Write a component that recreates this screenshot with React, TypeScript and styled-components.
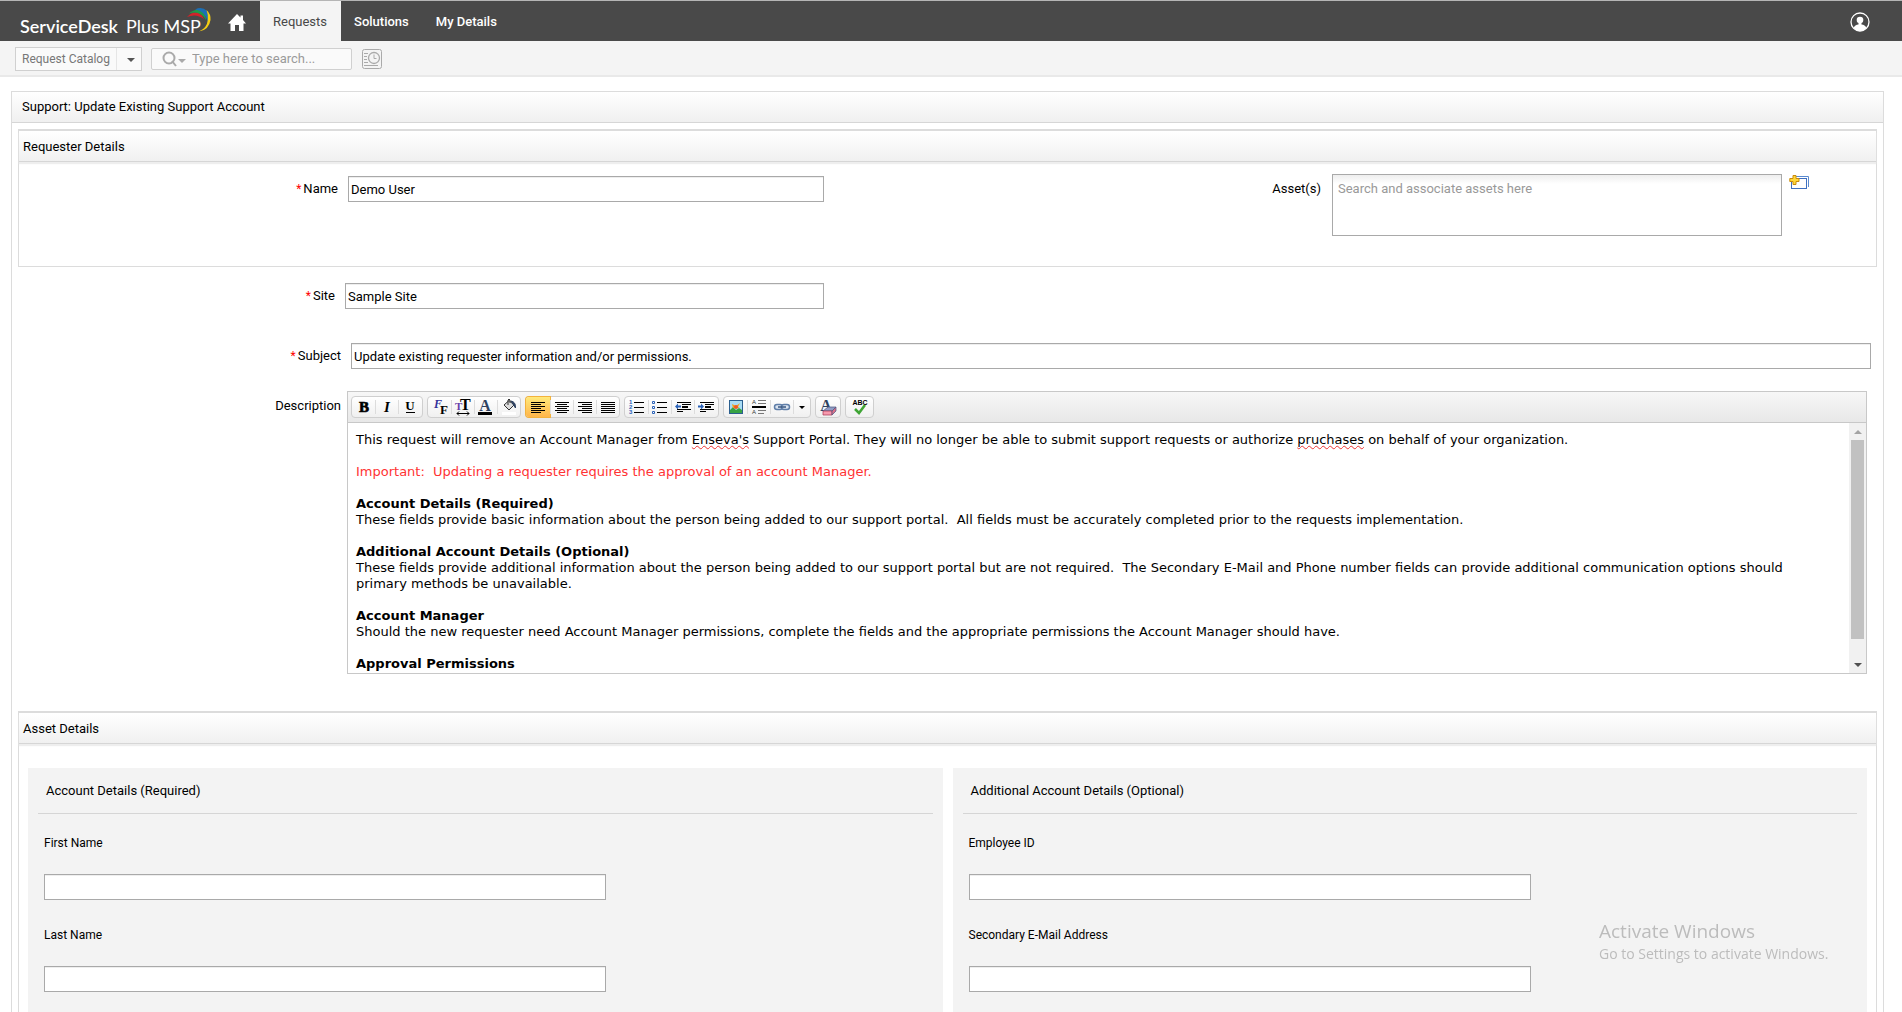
import React from 'react';
import styled, { createGlobalStyle } from 'styled-components';

const GlobalStyle = createGlobalStyle`
  *, *::before, *::after { box-sizing: border-box; }
  body {
    margin: 0;
    background: #fff;
    color: #000;
    font: 13px/16px Roboto, "Liberation Sans", sans-serif;
  }
  button, input, select, textarea { font: inherit; color: inherit; margin: 0; }
`;

const Page = styled.div`
  height: 100vh;
  overflow: hidden;
`;

/* ---------- top bar ---------- */
const TopBar = styled.header`
  display: flex;
  align-items: stretch;
  height: 41px;
  padding: 0 32px 0 20px;
  background: #494949;
  border-top: 1px solid #b5b5b5;
  color: #fff;
`;

const Logo = styled.a`
  display: flex;
  align-items: center;
  width: 193px;
  padding-top: 9px;
  position: relative;
  color: #fff;
  text-decoration: none;
  white-space: nowrap;
  font: 600 18px/20px Lato, "Open Sans", sans-serif;
  span { font-weight: 400; margin-left: 8px; }
  svg { position: absolute; left: 167px; top: 6px; }
`;

const HomeLink = styled.a`
  display: flex;
  align-items: center;
  justify-content: center;
  width: 47px;
  padding-top: 2px;
`;

const NavLink = styled.a<{ $active?: boolean }>`
  display: flex;
  align-items: center;
  padding: 2px 14px 0 13px;
  color: ${(p) => (p.$active ? '#484848' : '#fff')};
  background: ${(p) => (p.$active ? '#f4f4f4' : 'transparent')};
  font-weight: ${(p) => (p.$active ? 400 : 500)};
  text-decoration: none;
`;

const UserButton = styled.button`
  display: flex;
  align-items: center;
  margin-left: auto;
  padding: 2px 0 0;
  border: 0;
  background: none;
`;

/* ---------- tool strip ---------- */
const ToolStrip = styled.div`
  display: flex;
  align-items: center;
  height: 36px;
  padding: 1px 15px 0;
  background: #f4f4f4;
  border-bottom: 2px solid #e9e9e9;
`;

const CatalogBox = styled.div`
  display: flex;
  position: relative;
  width: 127px;
  height: 24px;
  margin-right: 9px;
  border: 1px solid #d0d0d0;
  background: #fafafa;
  svg { position: absolute; right: 6px; top: 10px; pointer-events: none; }
  &::after {
    content: "";
    position: absolute;
    right: 24px;
    top: 0;
    bottom: 0;
    border-left: 1px solid #e6e6e6;
  }
`;

const CatalogSelect = styled.select`
  flex: 1;
  min-width: 0;
  padding: 0 0 0 6px;
  border: 0;
  background: none;
  color: #777;
  font-size: 12px;
  appearance: none;
`;

const SearchBox = styled.div`
  display: flex;
  align-items: center;
  gap: 5px;
  width: 201px;
  height: 22px;
  margin-right: 10px;
  padding-left: 10px;
  border: 1px solid #d0d0d0;
  border-radius: 2px;
  background: #fafafa;
`;

const SearchInput = styled.input`
  flex: 1;
  min-width: 0;
  padding: 0;
  border: 0;
  background: none;
  &::placeholder { color: #9a9a9a; opacity: 1; }
`;

const IconButton = styled.button`
  display: flex;
  flex: none;
  padding: 0;
  border: 0;
  background: none;
`;

/* ---------- panels ---------- */
const Panel = styled.main`
  margin: 14px 18px 0 11px;
  border: 1px solid #dcdcdc;
`;

const PanelTitle = styled.h1`
  margin: 0 0 6px;
  padding: 7px 10px;
  font-size: 13px;
  line-height: 16px;
  font-weight: 400;
  border-bottom: 1px solid #d6d6d6;
  background: linear-gradient(#fff, #f0f0f0);
`;

const Section = styled.section`
  margin: 0 6px;
  border: 1px solid #dcdcdc;
  border-top-width: 2px;
`;

const SectionTitle = styled.h2`
  margin: 0;
  padding: 8px 4px 6px;
  font-size: 13px;
  line-height: 16px;
  font-weight: 400;
  border-bottom: 1px solid #d6d6d6;
  box-shadow: 0 2px 1px #eee;
  background: linear-gradient(#fff, #f0f0f0);
`;

const Row = styled.div<{ $top?: number; $right?: number; $gap?: number }>`
  display: flex;
  flex: 1;
  align-items: flex-start;
  gap: ${(p) => p.$gap ?? 10}px;
  margin-top: ${(p) => p.$top ?? 0}px;
  padding-right: ${(p) => p.$right ?? 0}px;
`;

const Label = styled.label<{ $width?: number; $required?: boolean; $top?: number }>`
  flex: none;
  width: ${(p) => (p.$width ? p.$width + 'px' : 'auto')};
  padding-top: ${(p) => p.$top ?? 5}px;
  text-align: right;
  &::before {
    content: "${(p) => (p.$required ? '*' : '')}";
    color: #f00;
    font-size: 12px;
    margin-right: ${(p) => (p.$required ? 2 : 0)}px;
  }
`;

const TextInput = styled.input<{ $width?: number }>`
  flex: ${(p) => (p.$width ? `0 1 ${p.$width}px` : '1')};
  min-width: 0;
  height: 26px;
  padding: 1px 2px 0;
  border: 1px solid #a9a9a9;
  background: #fff;
  box-shadow: inset 0 1px 0 #eee;
`;

const AssetField = styled.div`
  display: flex;
  align-items: flex-start;
  gap: 7px;
  margin-left: auto;
  label { margin-right: 4px; }
`;

const AssetArea = styled.textarea`
  display: block;
  width: 450px;
  height: 62px;
  padding: 6px 5px;
  border: 1px solid #a9a9a9;
  resize: none;
  background: linear-gradient(#eee, #fff 9px);
  &::placeholder { color: #999; opacity: 1; }
`;

const RequesterBody = styled.div`
  display: flex;
  align-items: flex-start;
  min-height: 104px;
  padding: 12px 67px 0 0;
`;

/* ---------- rich text editor ---------- */
const Editor = styled.div`
  flex: 1;
  min-width: 0;
  border: 1px solid #c8c8c8;
`;

const EditorBar = styled.div`
  display: flex;
  gap: 4px;
  height: 31px;
  padding: 4px 3px;
  border-bottom: 1px solid #c8c8c8;
  background: linear-gradient(#f7f7f7, #e8e8e8);
`;

const ToolGroup = styled.div`
  display: flex;
  height: 22px;
  border: 1px solid #cfcfcf;
  border-radius: 4px;
  background: linear-gradient(#fff, #f0f0f0);
`;

const ToolButton = styled.button<{ $active?: boolean; $width?: number }>`
  display: flex;
  align-items: center;
  justify-content: center;
  width: ${(p) => p.$width ?? 23}px;
  padding: 0;
  border: 0;
  border-radius: ${(p) => (p.$active ? '3px 0 0 3px' : '0')};
  background: ${(p) => (p.$active ? 'linear-gradient(#ffe97a, #ffb54a)' : 'none')};
  box-shadow: ${(p) => (p.$active ? '0 0 0 1px #f3b23c' : 'none')};
  svg { display: block; overflow: visible; }
  & + & {
    background-image: linear-gradient(#dcdcdc, #dcdcdc);
    background-size: 1px 14px;
    background-position: 0 3px;
    background-repeat: no-repeat;
  }
`;

const EditorBody = styled.div`
  display: flex;
  height: 250px;
`;

const EditorText = styled.div`
  flex: 1;
  min-width: 0;
  overflow: hidden;
  padding: 9px 18px 0 8px;
  font: 13px/16px Verdana, "DejaVu Sans", sans-serif;
  outline: none;
  p { margin: 0 0 16px; white-space: pre-wrap; }
`;

const Warning = styled.p`
  color: #f33;
`;

const Misspelt = styled.span`
  text-decoration: underline wavy #e33 1px;
  text-underline-offset: 1px;
  text-decoration-skip-ink: none;
`;

const ScrollTrack = styled.div`
  display: flex;
  flex-direction: column;
  align-items: center;
  width: 17px;
  background: #f1f1f1;
`;

const ScrollArrow = styled.button`
  display: flex;
  align-items: center;
  justify-content: center;
  width: 17px;
  height: 17px;
  padding: 0;
  border: 0;
  background: none;
`;

const ScrollThumb = styled.div`
  width: 13px;
  height: 199px;
  margin-bottom: auto;
  background: #c1c1c1;
`;

/* ---------- detail cards ---------- */
const Cards = styled.div`
  display: grid;
  grid-template-columns: 1fr 1fr;
  gap: 10px;
  padding: 24px 9px 0;
`;

const Card = styled.fieldset`
  display: block;
  min-width: 0;
  margin: 0;
  padding: 15px 10px 60px;
  border: 0;
  background: #f3f3f3;
`;

const CardTitle = styled.h3`
  margin: 0;
  padding: 0 8px 14px;
  font-size: 13px;
  line-height: 16px;
  font-weight: 400;
  border-bottom: 1px solid #d5d5d5;
`;

const CardField = styled.div`
  display: flex;
  flex-direction: column;
  align-items: flex-start;
  gap: 23px;
  padding: 21px 6px 6px;
  font-size: 12px;
  label { line-height: 16px; }
  input { flex: none; width: 562px; max-width: 100%; }
`;

const Watermark = styled.aside`
  position: fixed;
  left: calc(100% - 303px);
  bottom: 48px;
  color: #bcbcbc;
  font: 14px/20px "Open Sans", sans-serif;
  white-space: nowrap;
  pointer-events: none;
  strong { display: block; font-size: 19px; line-height: 26px; font-weight: 400; }
`;

/* ---------- drawings ---------- */
const Caret = ({ color = '#555', up = false }: { color?: string; up?: boolean }) => (
  <svg width="8" height="4" viewBox="0 0 8 4">
    <path d={up ? 'M0 4L4 0L8 4Z' : 'M0 0H8L4 4Z'} fill={color} />
  </svg>
);

const Lines = ({ rows }: { rows: [number, number][] }) => (
  <svg width="16" height="14" viewBox="0 0 16 14" shapeRendering="crispEdges">
    {rows.map(([x, w], i) => (
      <rect key={i} x={x} y={2 + i * 2} width={w} height="1" fill="#000" />
    ))}
  </svg>
);

const svg16 = { width: 18, height: 18, viewBox: '0 0 18 18' };
const serif = 'Liberation Serif, serif';

const icons = {
  bold: <svg {...svg16}><text x="9" y="14" textAnchor="middle" fontFamily={serif} fontWeight="700" fontSize="15" stroke="#000" strokeWidth=".7">B</text></svg>,
  italic: <svg {...svg16}><text x="9" y="14" textAnchor="middle" fontFamily={serif} fontStyle="italic" fontWeight="700" fontSize="15">I</text></svg>,
  underline: <svg {...svg16}><text x="9" y="12" textAnchor="middle" fontFamily={serif} fontWeight="700" fontSize="13">U</text><path d="M5 14.500H14" stroke="#000" /></svg>,
  font: <svg {...svg16}><text x="3" y="10" fontFamily={serif} fontStyle="italic" fontWeight="700" fontSize="12" fill="#33339a">F</text><text x="9" y="16" fontFamily={serif} fontWeight="700" fontSize="13">F</text></svg>,
  size: <svg {...svg16}><text x="1" y="12" fontFamily={serif} fontWeight="700" fontSize="11" fill="#6a3fa8">T</text><text x="6" y="12" fontFamily={serif} fontWeight="700" fontSize="16">T</text><path d="M3 15.500H15M5 13.500L3 15.500L5 17.500M13 13.500L15 15.500L13 17.500" stroke="#000" fill="none" /></svg>,
  color: <svg {...svg16}><text x="8" y="13" textAnchor="middle" fontFamily={serif} fontWeight="700" fontSize="16" fill="#2f4260">A</text><path d="M1 14H15V17H1Z" /></svg>,
  fill: <svg {...svg16}><path d="M2 14H16V17H2Z" fill="#fff" /><path d="M4 7L9 2.500L14 7L9 12Z" fill="#ddd" stroke="#333" /><path d="M8 7V2Q9 0 10 2V5" fill="none" stroke="#333" /><path d="M11 3Q16 4 15.500 10Q14 8 13 6Z" fill="#2f4260" stroke="#2f4260" /></svg>,
  ordered: <svg {...svg16}><g fill="#2a62b8" fontFamily="Liberation Sans, sans-serif" fontSize="6" fontWeight="700"><text x="1" y="6">1</text><text x="1" y="11">2</text><text x="1" y="16">3</text></g><path d="M6 4.500H16M6 9.500H16M6 14.500H16" stroke="#000" /></svg>,
  bullets: <svg {...svg16}><path d="M1.500 3.500h2v2h-2zM1.500 8.500h2v2h-2zM1.500 13.500h2v2h-2z" fill="#fff" stroke="#2a62b8" /><path d="M6 4.500H16M6 9.500H16M6 14.500H16" stroke="#000" /></svg>,
  outdent: <svg {...svg16}><path d="M3 4.500H17M8 6.500H17" stroke="#000" /><path d="M8 9H14" stroke="#000" strokeWidth="2" /><path d="M3 11.500H17M3 13.500H9" stroke="#000" /><path d="M1 8.500L4 5.500V7.500H7V9.500H4V11.500Z" fill="#2a62b8" /></svg>,
  indent: <svg {...svg16}><path d="M3 4.500H17M8 6.500H17" stroke="#000" /><path d="M8 9H14" stroke="#000" strokeWidth="2" /><path d="M3 11.500H17M3 13.500H9" stroke="#000" /><path d="M7 8.500L4 5.500V7.500H1V9.500H4V11.500Z" fill="#2a62b8" /></svg>,
  image: <svg {...svg16}><rect x="2.500" y="2.500" width="13" height="13" fill="#a9dcf5" stroke="#2b5f8f" /><path d="M3 15V12L6 9L9 12L12 10L15 12V15Z" fill="#37a344" /><path d="M5 6L9 8L13 5L11 9L13 10H6Z" fill="#f2a21b" /><circle cx="9" cy="9" r="2" fill="#ee5a24" /></svg>,
  rule: <svg {...svg16}><g fontFamily="Liberation Sans, sans-serif" fontSize="6" fill="#333"><text x="2" y="6">A</text><text x="2" y="16">A</text></g><path d="M8 2.500H16M8 5.500H16M8 12.500H16M8 15.500H14" stroke="#777" /><path d="M2 9H16" stroke="#000" strokeWidth="2" /></svg>,
  link: <svg {...svg16}><rect x="1.500" y="6.500" width="8" height="5" rx="2.500" fill="#dbe5f1" stroke="#5f7ea8" strokeWidth="1.500" /><rect x="8.500" y="6.500" width="8" height="5" rx="2.500" fill="#dbe5f1" stroke="#5f7ea8" strokeWidth="1.500" /><path d="M5 9H13" stroke="#39567f" strokeWidth="1.500" /></svg>,
  clear: <svg {...svg16}><text x="7" y="13" textAnchor="middle" fontFamily={serif} fontWeight="700" fontSize="16" fill="#2f4260">A</text><path d="M4 13L9 9H17L13 13Z" fill="#8f9cc4" stroke="#4c5682" strokeWidth=".7" /><path d="M4 13H13V17H4Z" fill="#f79aae" stroke="#a3324d" strokeWidth=".7" /><path d="M13 13L17 9V13L13 17Z" fill="#d8718a" stroke="#4c5682" strokeWidth=".7" /></svg>,
  spell: <svg {...svg16}><path d="M4 11L8 15L14 7" stroke="#3fa535" strokeWidth="2.500" fill="none" /><text x="9" y="7" textAnchor="middle" fontFamily="Liberation Sans, sans-serif" fontWeight="700" fontSize="7">ABC</text></svg>,
};

const toolGroups: { label: string; icon: React.ReactNode; active?: boolean; width?: number }[][] = [
  [
    { label: 'Bold', icon: icons.bold },
    { label: 'Italic', icon: icons.italic },
    { label: 'Underline', icon: icons.underline, width: 24 },
  ],
  [
    { label: 'Font', icon: icons.font },
    { label: 'Font size', icon: icons.size },
    { label: 'Font colour', icon: icons.color },
    { label: 'Fill colour', icon: icons.fill },
  ],
  [
    { label: 'Align left', active: true, width: 24, icon: <Lines rows={[[1, 14], [1, 10], [1, 14], [1, 10], [1, 14], [1, 10]]} /> },
    { label: 'Align centre', icon: <Lines rows={[[1, 14], [3, 10], [1, 14], [3, 10], [1, 14], [3, 10]]} /> },
    { label: 'Align right', icon: <Lines rows={[[1, 14], [5, 10], [1, 14], [5, 10], [1, 14], [5, 10]]} /> },
    { label: 'Justify', icon: <Lines rows={[[1, 14], [1, 14], [1, 14], [1, 14], [1, 14], [1, 14]]} /> },
  ],
  [
    { label: 'Numbered list', icon: icons.ordered },
    { label: 'Bulleted list', icon: icons.bullets },
    { label: 'Outdent', icon: icons.outdent },
    { label: 'Indent', icon: icons.indent, width: 24 },
  ],
  [
    { label: 'Image', icon: icons.image },
    { label: 'Rule', icon: icons.rule },
    { label: 'Link', icon: icons.link },
    { label: 'More links', icon: <svg width="6" height="3" viewBox="0 0 6 3"><path d="M0 0H6L3 3Z" /></svg>, width: 17 },
  ],
  [{ label: 'Clear formatting', icon: icons.clear, width: 24 }],
  [{ label: 'Check spelling', icon: icons.spell, width: 27 }],
];

const cards = [
  { title: 'Account Details (Required)', fields: ['First Name', 'Last Name'] },
  { title: 'Additional Account Details (Optional)', fields: ['Employee ID', 'Secondary E-Mail Address'] },
];

export default function App() {
  return (
    <Page>
      <GlobalStyle />
      <TopBar>
        <Logo href="#">
          ServiceDesk<span>Plus MSP</span>
          <svg width="24" height="26" viewBox="0 0 24 26">
            <path d="M0 10Q8 2 15 8.500L17 12Q9 6 0 10Z" fill="#d2232a" />
            <path d="M2 6.500Q10 0 16 5Q19 8 19 13Q13 2.500 2 6.500Z" fill="#1f9a49" />
            <path d="M8 2.500Q15 -1 20 4Q22 7 21 15Q17 3 8 2.500Z" fill="#1c6fb5" />
            <path d="M19.500 3Q24 7 23.500 13Q22 23 12 24.500Q20 21 20.800 13Q21.500 8 19.500 3Z" fill="#f5cd12" />
          </svg>
        </Logo>
        <HomeLink href="#" aria-label="Home">
          <svg width="18" height="17" viewBox="0 0 18 17" fill="#fff">
            <path d="M9 0L12.500 3.500V1.500H15V6L18 9.500H15.500V17H11V11H7V17H2.500V9.500H0Z" />
          </svg>
        </HomeLink>
        <NavLink href="#" $active>Requests</NavLink>
        <NavLink href="#">Solutions</NavLink>
        <NavLink href="#">My Details</NavLink>
        <UserButton aria-label="Account">
          <svg width="20" height="20" viewBox="0 0 20 20">
            <circle cx="10" cy="10" r="9" fill="none" stroke="#fff" strokeWidth="1.300" />
            <circle cx="10" cy="8" r="3.300" fill="#fff" />
            <path d="M3.500 16Q5 12.500 8.500 12.500V11H11.500V12.500Q15 12.500 16.500 16Q14 19 10 19Q6 19 3.500 16Z" fill="#fff" />
          </svg>
        </UserButton>
      </TopBar>

      <ToolStrip>
        <CatalogBox>
          <CatalogSelect aria-label="Catalog"><option>Request Catalog</option></CatalogSelect>
          <Caret />
        </CatalogBox>
        <SearchBox>
          <svg width="25" height="16" viewBox="0 0 25 16">
            <circle cx="7" cy="7" r="5.500" fill="none" stroke="#aaa" strokeWidth="2" />
            <path d="M10 10L14 15" stroke="#aaa" strokeWidth="2" />
            <path d="M16 8H24L20 12Z" fill="#aaa" />
          </svg>
          <SearchInput aria-label="Search" placeholder="Type here to search..." />
        </SearchBox>
        <IconButton aria-label="Recent items">
          <svg width="20" height="20" viewBox="0 0 20 20" fill="none" stroke="#aaa">
            <rect x=".5" y=".5" width="19" height="19" rx="2" />
            <path d="M2 4.500H6M2 7.500H5M2 10.500H5M2 13.500H6M2 16.500H16" />
            <circle cx="12" cy="9" r="5.500" strokeWidth="1.300" />
            <path d="M12 5.500V9.500H14.500" />
          </svg>
        </IconButton>
      </ToolStrip>

      <Panel>
        <PanelTitle>Support: Update Existing Support Account</PanelTitle>

        <Section>
          <SectionTitle>Requester Details</SectionTitle>
          <RequesterBody>
            <Row $top={2}>
              <Label htmlFor="name" $width={319} $required>Name</Label>
              <TextInput id="name" $width={476} defaultValue="Demo User" />
            </Row>
            <AssetField>
              <Label htmlFor="assets" $top={7}>Asset(s)</Label>
              <AssetArea id="assets" placeholder="Search and associate assets here" />
              <IconButton aria-label="Add asset">
                <svg width="20" height="16" viewBox="0 0 20 16">
                  <path d="M6 2.500H19.500V13" fill="none" stroke="#5b8bd0" />
                  <rect x="2.500" y="4.500" width="15" height="10" fill="#fff" stroke="#3f6fc0" />
                  <path d="M4 1.500H7V4.500H10V7.500H7V10.500H4V7.500H.8V4.500H4Z" fill="#ffd83a" stroke="#c98b0c" />
                </svg>
              </IconButton>
            </AssetField>
          </RequesterBody>
        </Section>

        <Row $top={16}>
          <Label htmlFor="site" $width={323} $required>Site</Label>
          <TextInput id="site" $width={479} defaultValue="Sample Site" />
        </Row>
        <Row $top={34} $right={12}>
          <Label htmlFor="subject" $width={329} $required>Subject</Label>
          <TextInput id="subject" defaultValue="Update existing requester information and/or permissions." />
        </Row>
        <Row $top={22} $right={16} $gap={6}>
          <Label as="span" id="description" $width={329} $top={7}>Description</Label>
          <Editor>
            <EditorBar role="toolbar">
              {toolGroups.map((group, i) => (
                <ToolGroup key={i}>
                  {group.map((tool) => (
                    <ToolButton key={tool.label} aria-label={tool.label} $active={tool.active} $width={tool.width}>
                      {tool.icon}
                    </ToolButton>
                  ))}
                </ToolGroup>
              ))}
            </EditorBar>
            <EditorBody>
              <EditorText role="textbox" aria-multiline="true" aria-labelledby="description" tabIndex={0}>
                <p>
                  This request will remove an Account Manager from <Misspelt>Enseva's</Misspelt> Support Portal. They will
                  {' '}no longer be able to submit support requests or authorize <Misspelt>pruchases</Misspelt> on behalf of your organization.
                </p>
                <Warning>{'Important:\u00a0 Updating a requester requires the approval of an account Manager.'}</Warning>
                <p>
                  <b>Account Details (Required)</b><br />
                  {'These fields provide basic information about the person being added to our support portal.\u00a0 All fields must be accurately completed prior to the requests implementation.'}
                </p>
                <p>
                  <b>Additional Account Details (Optional)</b><br />
                  {'These fields provide additional information about the person being added to our support portal but are not required.\u00a0 The Secondary E-Mail and Phone number fields can provide additional communication options should primary methods be unavailable.'}
                </p>
                <p>
                  <b>Account Manager</b><br />
                  Should the new requester need Account Manager permissions, complete the fields and the appropriate permissions the Account Manager should have.
                </p>
                <p><b>Approval Permissions</b></p>
              </EditorText>
              <ScrollTrack>
                <ScrollArrow aria-label="Scroll up"><Caret up color="#a3a3a3" /></ScrollArrow>
                <ScrollThumb />
                <ScrollArrow aria-label="Scroll down"><Caret color="#505050" /></ScrollArrow>
              </ScrollTrack>
            </EditorBody>
          </Editor>
        </Row>

        <Row $top={37} />
        <Section>
          <SectionTitle>Asset Details</SectionTitle>
          <Cards>
            {cards.map((card) => (
              <Card key={card.title} aria-label={card.title}>
                <CardTitle>{card.title}</CardTitle>
                {card.fields.map((field) => (
                  <CardField key={field}>
                    <label htmlFor={field}>{field}</label>
                    <TextInput id={field} />
                  </CardField>
                ))}
              </Card>
            ))}
          </Cards>
        </Section>
      </Panel>

      <Watermark>
        <strong>Activate Windows</strong>
        Go to Settings to activate Windows.
      </Watermark>
    </Page>
  );
}
